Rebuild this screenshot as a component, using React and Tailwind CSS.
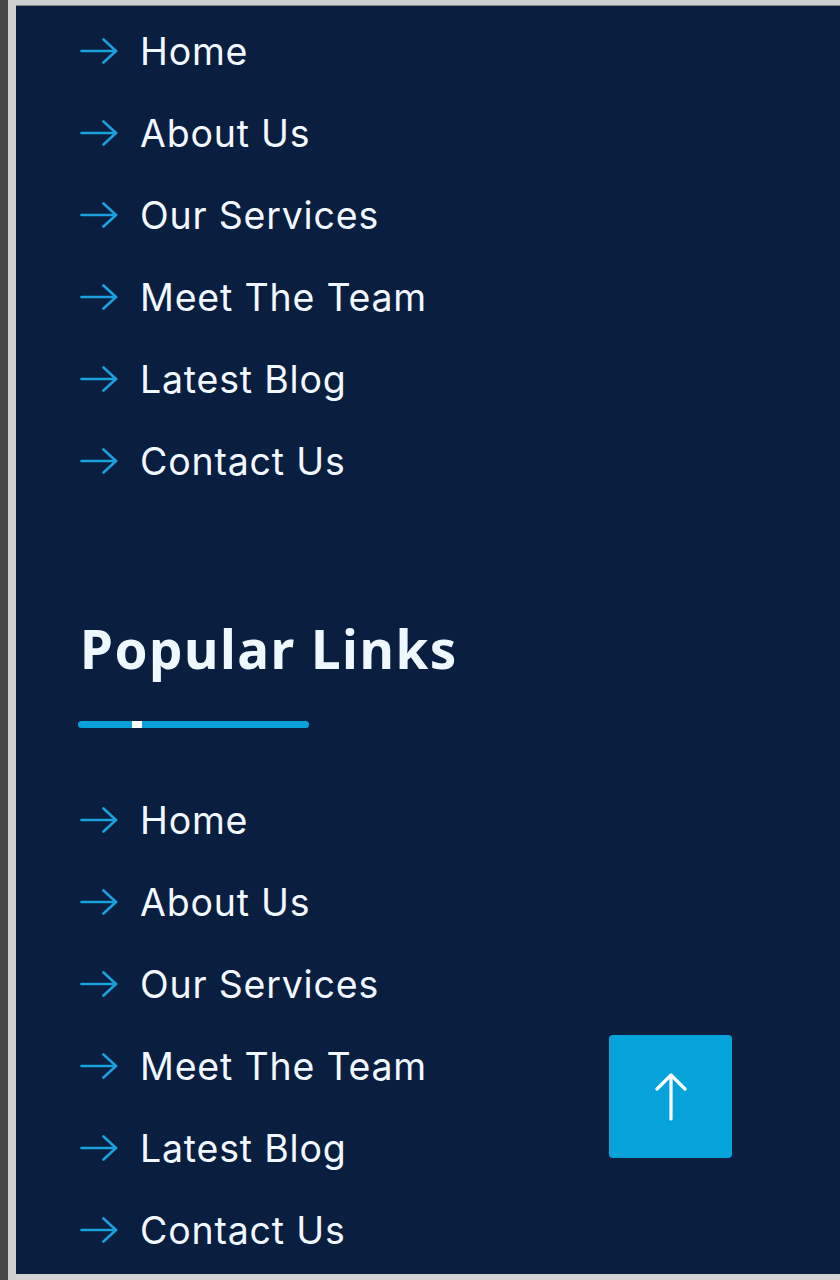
import React from "react";

const links = ["Home", "About Us", "Our Services", "Meet The Team", "Latest Blog", "Contact Us"];

function Arrow() {
  return (
    <svg width="38" height="26" viewBox="0 0 38 26" fill="none" className="shrink-0">
      <path d="M1.5 13H36" stroke="#1aa0dc" strokeWidth="2.6" strokeLinecap="round" />
      <path d="M23.5 1.5L36 13L23.5 24.5" stroke="#1aa0dc" strokeWidth="2.6" strokeLinecap="round" strokeLinejoin="round" />
    </svg>
  );
}

function LinkList() {
  return (
    <ul className="flex flex-col">
      {links.map((l) => (
        <li key={l} className="h-[82px] flex items-center gap-[22px]">
          <Arrow />
          <span
            className="text-[37.5px] leading-none text-[#f2f8ff] tracking-[0.8px] translate-y-[1px]"
            style={{ fontFamily: "Inter, 'Noto Sans', sans-serif" }}
          >
            {l}
          </span>
        </li>
      ))}
    </ul>
  );
}

export default function App() {
  return (
    <div className="w-[840px] h-[1280px] flex bg-[#d2d2d2] overflow-hidden">
      <div className="w-[8px] h-full bg-[#474747]" />
      <div className="w-[8px] h-full bg-[#cfd1d1]" />
      <div className="flex-1 flex flex-col">
        <div className="h-[6px] bg-[#cdd0d0] border-b border-[#7d8585]" />
        <div className="relative flex-1 bg-[#0a1e3f] pl-[64px] pt-[4px]">
          <LinkList />
          <h2
            className="mt-[120px] text-[53px] leading-none font-bold text-[#f0f8ff] tracking-[1.5px]"
            style={{ fontFamily: "'Noto Sans', 'Open Sans', sans-serif" }}
          >
            Popular Links
          </h2>
          <div className="mt-[46px] ml-[-2px] w-[231px] h-[7px] rounded-full bg-[#06a3da] flex">
            <div className="ml-[54px] w-[10px] h-full bg-white" />
          </div>
          <div className="mt-[51px]">
            <LinkList />
          </div>
          <button className="absolute left-[593px] top-[1029px] w-[123px] h-[123px] rounded-[4px] bg-[#06a3da] flex items-center justify-center">
            <svg width="34" height="48" viewBox="0 0 34 48" fill="none">
              <path d="M17 46V3" stroke="white" strokeWidth="3.2" strokeLinecap="round" />
              <path d="M3 16L17 2L31 16" stroke="white" strokeWidth="3.2" strokeLinecap="round" strokeLinejoin="round" />
            </svg>
          </button>
        </div>
        <div className="h-[6px] bg-[#d3d3d3]" />
      </div>
    </div>
  );
}
